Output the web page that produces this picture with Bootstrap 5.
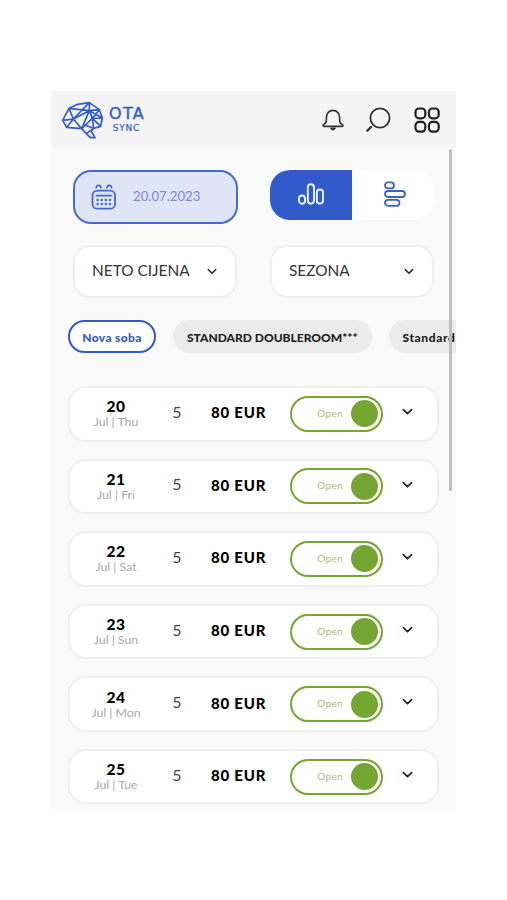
<!DOCTYPE html>
<html lang="hr">
<head>
<meta charset="utf-8">
<meta name="viewport" content="width=device-width, initial-scale=1">
<title>OTA Sync</title>
<link href="https://cdn.jsdelivr.net/npm/bootstrap@5.3.0/dist/css/bootstrap.min.css" rel="stylesheet">
<style>
  :root { --brand: #315bcb; --open: #74a631; }
  body { font-family: Lato, "Open Sans", sans-serif; background: #fff; color: #111; padding: 91px 0 0 51px; line-height: 1; overflow: hidden; }
  svg { display: block; fill: none; stroke-linecap: round; stroke-linejoin: round; flex: none; }
  .phone { width: 405px; height: 719px; background: #f9f9f9; }
  .topbar { height: 57px; background: #f4f4f4; padding: 0 16px 0 9px; }
  .brand-word { color: var(--brand); margin-left: 1px; font-family: "DejaVu Sans", sans-serif; text-align: center; width: 39px; }
  .brand-ota { font-size: 16px; letter-spacing: 1.3px; line-height: 16px; margin-right: -1px; white-space: nowrap; -webkit-text-stroke: .4px var(--brand); }
  .brand-sync { font-size: 9px; letter-spacing: .8px; line-height: 12px; -webkit-text-stroke: .2px var(--brand); }
  .top-icons { gap: 22px; color: #222; }
  .controls { padding: 22px 22px 0 22px; }
  .date-box { width: 165px; height: 54px; border: 2px solid #456ad0; border-radius: 18px; background: #dfe5f4; color: #7c88cf; padding-left: 16px; font-size: 13.2px; gap: 16px; }
  .view-toggle { width: 164px; height: 50px; border-radius: 20px; background: #fff; }
  .view-toggle > div { width: 50%; }
  .view-toggle .chosen { background: var(--brand); }
  .view-toggle svg { margin-bottom: 2px; }
  .selects { padding: 21px 22px 0; }
  .select-box { width: 164px; height: 53px; border: 2px solid #efefef; border-radius: 17px; background: #fff; color: #333; font-size: 15.4px; padding: 0 18px 0 17px; }
  .select-box span { padding-bottom: 1px; }
  .chips { padding: 22px 0 0 17px; gap: 17px; height: 56px; }
  .chip { height: 33px; border-radius: 17px; background: #ebebeb; font-size: 12px; font-weight: 900; color: #222; flex: none; padding: 2px 14px 0; }
  .chip.current { background: #fff; color: var(--brand); border: 2px solid var(--brand); width: 88px; padding: 2px 0 0; letter-spacing: .35px; }
  .chip-spaced { letter-spacing: .6px; }
  .days { padding: 32px 17px 0; gap: 17.1px; }
  .day { height: 55.5px; border: 2px solid #efefef; border-radius: 18px; background: #fff; flex: none; }
  .date-col { width: 92px; text-align: center; }
  .date-no { font-weight: 900; font-size: 15.5px; line-height: 16px; color: #000; letter-spacing: .4px; }
  .date-name { font-size: 12.3px; line-height: 15px; color: #a8a8a8; }
  .units { width: 30px; text-align: center; font-size: 16px; color: #444; padding-bottom: 4px; }
  .price { width: 98px; padding: 0 0 2px 19px; font-size: 15px; font-weight: 900; color: #000; letter-spacing: .8px; white-space: nowrap; }
  .switch { width: 93px; height: 36px; border: 2px solid var(--open); border-radius: 18px; color: #9fc470; font-size: 10px; letter-spacing: .35px; padding-right: 3px; gap: 8px; }
  .switch span { padding-bottom: 2px; }
  .knob { width: 27px; height: 27px; background: var(--open); }
  .more { margin: 0 0 4px 19px; }
  .thumb { left: 398px; top: 58px; width: 3px; height: 342px; background: #bcbcbc; }
</style>
</head>
<body>
<svg width="0" height="0" class="position-absolute">
  <symbol id="chev" viewBox="0 0 10 7"><path d="M1.2 1.5 5 5.2 8.8 1.5" stroke="#222" stroke-width="1.5" fill="none"/></symbol>
</svg>
<main class="phone position-relative overflow-hidden">
  <header class="topbar d-flex align-items-center justify-content-between">
    <div class="d-flex align-items-center">
      <svg width="46" height="44" viewBox="0 0 138 132" stroke="#315bcb" stroke-width="5"><path d="M8 67 27 31 53 19 88 14 118 35 127 60 122 85 101 91 94 100 105 119H91L65 92 20 88ZM27 31 88 38 88 14M53 19 27 31 40 63 88 14M8 67 40 63 88 38 118 35M40 63 20 88M40 63 65 92 88 38 127 60 97 61 65 92M88 38 97 61 122 85M97 61 101 91 76 82M118 35 97 61M80 106 101 91"/></svg>
      <div class="brand-word"><div class="brand-ota">OTA</div><div class="brand-sync">SYNC</div></div>
    </div>
    <div class="top-icons d-flex align-items-center">
      <svg width="22" height="24" viewBox="0 0 22 24" stroke="#333" stroke-width="1.6"><path d="M2 18.4C.7 18.4.7 16.7 2 16.3 3.5 15.8 4.4 14.2 4.4 12V9.3C4.4 5.3 7.2 2.4 11 2.4S17.6 5.3 17.6 9.3V12C17.6 14.2 18.5 15.8 20 16.3 21.3 16.7 21.3 18.4 20 18.4Z"/><path d="M9 20.2Q11 23 13 20.2Z" fill="#333"/></svg>
      <svg width="26" height="26" viewBox="0 0 26 26" stroke="#333"><circle cx="14" cy="11" r="9.6" stroke-width="1.8"/><path d="M5 20 1.4 23.6" stroke-width="2.4"/></svg>
      <svg width="26" height="26" viewBox="0 0 26 26" stroke="#222" stroke-width="2.2"><rect x="1.5" y="1.5" width="9.8" height="9.8" rx="3.6"/><rect x="14.9" y="1.5" width="9.8" height="9.8" rx="3.6"/><rect x="1.5" y="14.9" width="9.8" height="9.8" rx="3.6"/><rect x="14.9" y="14.9" width="9.8" height="9.8" rx="3.6"/></svg>
    </div>
  </header>
  <section class="controls d-flex justify-content-between">
    <div class="date-box d-flex align-items-center">
      <svg width="26" height="26" viewBox="0 0 26 26" stroke="#4269cb" stroke-width="1.8"><rect x="1.5" y="6.7" width="22.5" height="18" rx="4.8"/><path d="M5.5 11.6H20"/><path d="M5.3 3.5C5.5.7 9.6.7 9.8 3.5M16 3.5C16.2.7 20.3.7 20.5 3.5"/><path d="M6.6 16H6.7M10.7 16H10.8M14.8 16H14.9M18.9 16H19M6.6 20H6.7M10.7 20H10.8M14.8 20H14.9M18.9 20H19" stroke-width="2.4"/></svg>
      <span>20.07.2023</span>
    </div>
    <div class="view-toggle d-flex overflow-hidden">
      <div class="chosen d-flex align-items-center justify-content-center"><svg width="26" height="24" viewBox="0 0 26 24" stroke="#eef2ff" stroke-width="1.9"><rect x="1" y="13.5" width="6" height="8.2" rx="3"/><rect x="9.8" y="2.2" width="6.2" height="19.5" rx="3.1"/><rect x="18.8" y="7.5" width="6.2" height="14.2" rx="3.1"/></svg></div>
      <div class="d-flex align-items-center justify-content-center ps-1"><svg width="22" height="26" viewBox="0 0 22 26" stroke="#3b60ca" stroke-width="1.8"><rect x="1" y="1.4" width="9" height="6" rx="3"/><rect x="1" y="10" width="20" height="6" rx="3"/><rect x="1" y="18.8" width="14.5" height="6" rx="3"/></svg></div>
    </div>
  </section>
  <section class="selects d-flex justify-content-between">
    <div class="select-box d-flex align-items-center justify-content-between"><span>NETO CIJENA</span><svg width="10" height="7"><use href="#chev"/></svg></div>
    <div class="select-box d-flex align-items-center justify-content-between"><span>SEZONA</span><svg width="10" height="7"><use href="#chev"/></svg></div>
  </section>
  <nav class="chips d-flex">
    <div class="chip current d-flex align-items-center justify-content-center"><span>Nova soba</span></div>
    <div class="chip d-flex align-items-center"><span>STANDARD DOUBLEROOM***</span></div>
    <div class="chip d-flex align-items-center"><span class="chip-spaced">Standard</span></div>
  </nav>
  <section class="days d-flex flex-column" id="days"></section>
  <div class="thumb position-absolute rounded-pill"></div>
</main>
<script src="https://cdn.jsdelivr.net/npm/bootstrap@5.3.0/dist/js/bootstrap.bundle.min.js"></script>
<script>
  const weekdays = ["Thu", "Fri", "Sat", "Sun", "Mon", "Tue"];
  document.getElementById("days").innerHTML = weekdays.map((name, i) => `
    <article class="day d-flex align-items-center">
      <div class="date-col"><div class="date-no">${20 + i}</div><div class="date-name">Jul | ${name}</div></div>
      <div class="units">5</div>
      <div class="price">80 EUR</div>
      <div class="switch d-flex align-items-center justify-content-end"><span>Open</span><i class="knob rounded-circle"></i></div>
      <svg class="more" width="11" height="7.7"><use href="#chev"/></svg>
    </article>`).join("");
</script>
</body>
</html>
